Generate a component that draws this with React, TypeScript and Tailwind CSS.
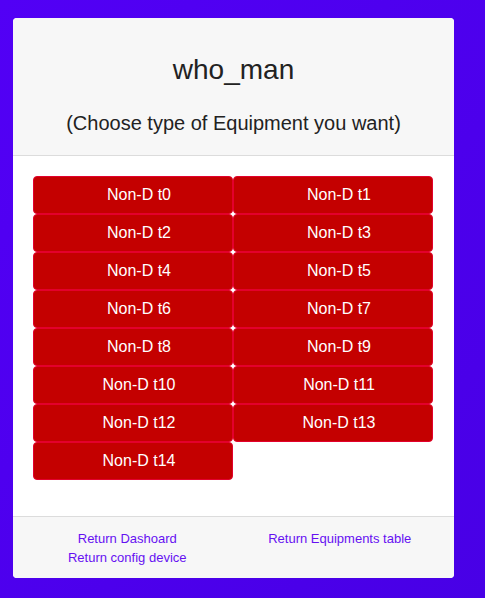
const items = Array.from({ length: 15 }, (_, i) => `Non-D t${i}`);

export default function App() {
  return (
    <div className="min-h-[598px] w-full bg-gradient-to-br from-[#5200f5] to-[#4800e6] pt-[18px] pl-[13px] font-['Liberation_Sans',Arial,sans-serif]">
      <div className="w-[441px] h-[560px] bg-white rounded flex flex-col overflow-hidden">
        <div className="bg-[#f7f7f7] border-b border-[#dcdcdc] pt-[35px] pb-[20px] text-center text-[#222]">
          <h1 className="text-[28px] leading-[34px]">who_man</h1>
          <p className="mt-[24px] text-[20px] leading-[24px]">(Choose type of Equipment you want)</p>
        </div>
        <div className="flex-1 px-[20px] pt-[20px]">
          <div className="grid grid-cols-[200px_200px]">
            {items.map((t) => (
              <button
                key={t}
                className="h-[38px] pl-3 bg-[#c40000] border border-[#e3002c] rounded text-white text-[16px]"
              >
                {t}
              </button>
            ))}
          </div>
        </div>
        <div className="bg-[#f7f7f7] border-t border-[#dcdcdc] px-2 pt-[12px] pb-[11px] grid grid-cols-2 text-[13px] leading-[19px] text-[#6610f2] text-center">
          <div className="flex flex-col">
            <a href="#">Return Dashoard</a>
            <a href="#">Return config device</a>
          </div>
          <div>
            <a href="#">Return Equipments table</a>
          </div>
        </div>
      </div>
    </div>
  );
}
